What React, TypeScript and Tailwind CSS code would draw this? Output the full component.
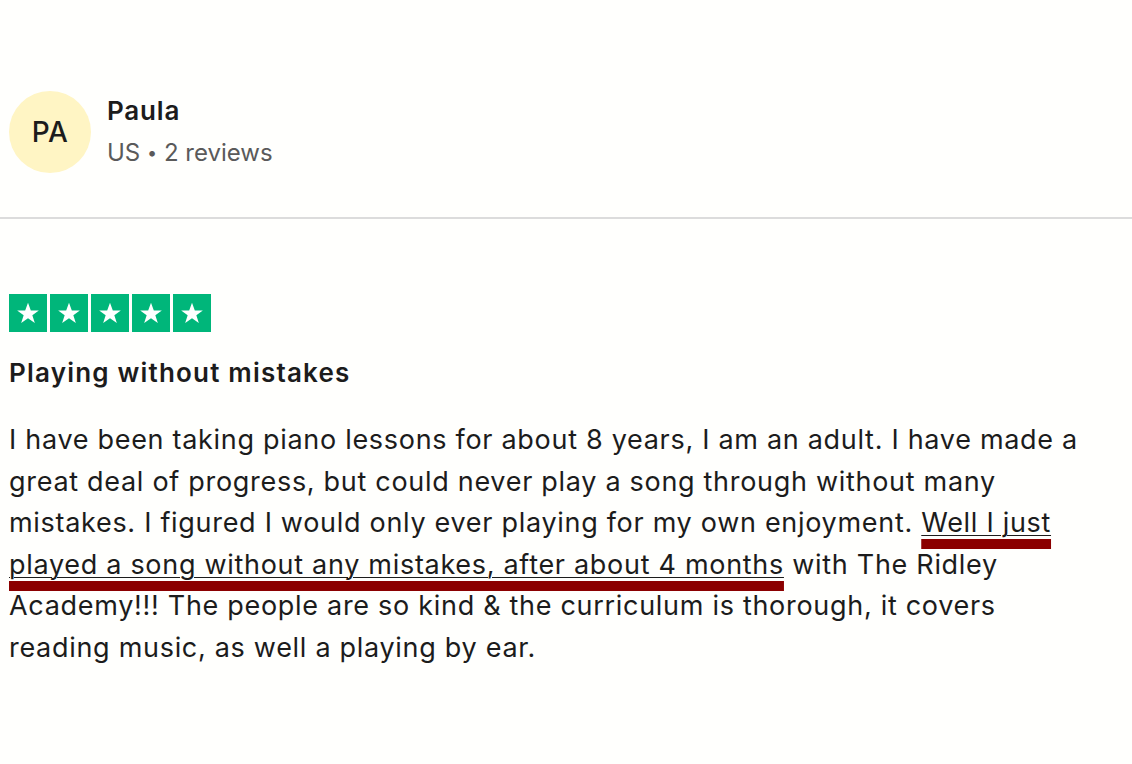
import React from "react";

// Review card — reviewer header, divider, stars, title and annotated body text.

function Star() {
  return (
    <span className="flex h-[38px] w-[38px] items-center justify-center bg-[#00b67a]">
      <svg viewBox="0 0 24 24" width="26" height="26" fill="#fff">
        <path d="M12 2.5l2.6 7.1h7.4l-6 4.5 2.3 7.2L12 16.9l-6.3 4.4L8 14.1 2 9.6h7.4z" />
      </svg>
    </span>
  );
}

export default function App() {
  return (
    <div
      className="min-h-[764px] w-[1132px] bg-[#fffffd] text-[#1c1c1c]"
      style={{ fontFamily: "Inter, 'Noto Sans', sans-serif" }}
    >
      <div className="flex items-center gap-4 px-[9px] pb-[44px] pt-[91px]">
        <div className="flex h-[82px] w-[82px] items-center justify-center rounded-full bg-[#fff5c4] text-[28px] font-medium tracking-[0.5px]">
          PA
        </div>
        <div className="flex flex-col gap-[8px] pb-[2px]">
          <span className="text-[26px] font-semibold leading-[36px] tracking-[0.8px]">Paula</span>
          <span className="text-[24px] leading-[32px] text-[#5a5a5a]">
            US <span className="text-[18px] align-[2px]">•</span> 2 reviews
          </span>
        </div>
      </div>
      <div className="h-[2px] w-full bg-[#dcdcdc]" />

      <div className="px-[9px] pt-[75px]">
        <div className="flex gap-[3px]">
          <Star />
          <Star />
          <Star />
          <Star />
          <Star />
        </div>
        <h2 className="mt-[23px] text-[26px] font-semibold leading-[36px] tracking-[1.2px]">
          Playing without mistakes
        </h2>
        <p className="mt-[28px] pr-[30px] text-[27px] leading-[41.6px] tracking-[0.7px]">
          I have been taking piano lessons for about 8 years, I am an adult. I have made a great deal of
          progress, but could never play a song through without many mistakes. I figured I would only
          ever playing for my own enjoyment.{" "}
          <span className="underline decoration-[#8b0000] decoration-[10px] underline-offset-[7px]">
            <span className="underline decoration-[#1c1c1c] decoration-1 underline-offset-[3px]">
              Well I just played a song without any mistakes, after about 4 months
            </span>
          </span>{" "}
          with The Ridley Academy!!! The people are so kind &amp; the curriculum is thorough, it covers
          reading music, as well a playing by ear.
        </p>
      </div>
    </div>
  );
}
